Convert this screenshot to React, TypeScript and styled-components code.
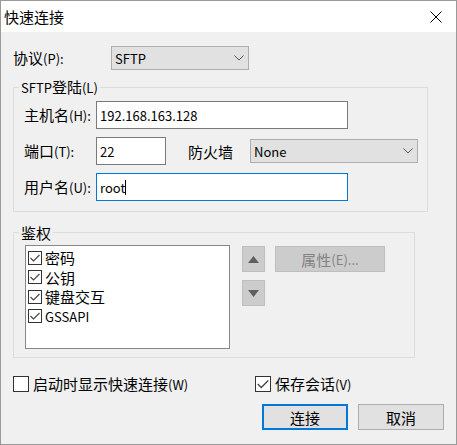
import React from "react";
import styled, { createGlobalStyle } from "styled-components";

const FONT = `"Noto Sans CJK SC", "Microsoft YaHei", sans-serif`;

const GlobalStyle = createGlobalStyle`
  html, body { margin: 0; padding: 0; background: #f0f0f0; }
  body { font-family: ${FONT}; font-size: 15px; line-height: 17px; color: #000; }
  * { box-sizing: border-box; }
`;

const LatinRun = styled.span`
  font-size: 13px;
`;

const T: React.FC<{ children: string }> = ({ children }) => {
  const parts = children.split(/([\u0000-\u024f]+)/).filter((s) => s.length > 0);
  return (
    <>
      {parts.map((p, i) =>
        /^[\u0000-\u024f]+$/.test(p) ? <LatinRun key={i}>{p}</LatinRun> : <React.Fragment key={i}>{p}</React.Fragment>
      )}
    </>
  );
};

const Window = styled.div`
  width: 457px;
  height: 445px;
  border: 1px solid #9a9a9a;
  background: #f0f0f0;
  display: flex;
  flex-direction: column;
  overflow: hidden;
`;

const TitleBar = styled.div`
  height: 31px;
  flex: none;
  background: #ffffff;
  display: flex;
  align-items: center;
  justify-content: space-between;
  padding: 0 14px 0 3px;
`;

const Title = styled.span`
  font-size: 15px;
  line-height: 17px;
`;

const Client = styled.div`
  display: flex;
  flex-direction: column;
  padding: 14px 12px 0 12px;
`;

const Row = styled.div<{ $h?: number }>`
  display: flex;
  align-items: center;
  height: ${(p) => p.$h ?? 28}px;
`;

const Label = styled.span<{ $w: number }>`
  width: ${(p) => p.$w}px;
  flex: none;
  white-space: nowrap;
`;

const Select = styled.div<{ $w: number }>`
  width: ${(p) => p.$w}px;
  height: 24px;
  flex: none;
  border: 1px solid #adadad;
  background: #e1e1e1;
  display: flex;
  align-items: center;
  justify-content: space-between;
  padding: 0 4px 0 3px;
`;

const TextBox = styled.div<{ $w: number; $focused?: boolean }>`
  width: ${(p) => p.$w}px;
  height: 28px;
  flex: none;
  border: 1px solid ${(p) => (p.$focused ? "#0078d7" : "#7a7a7a")};
  background: #ffffff;
  display: flex;
  align-items: center;
  padding: 0 3px;
  white-space: nowrap;
`;

const Caret = styled.span`
  display: inline-block;
  width: 1px;
  height: 15px;
  background: #000;
`;

const Group = styled.fieldset<{ $w: number; $mt: number }>`
  margin: ${(p) => p.$mt}px 0 0 0;
  padding: 0;
  width: ${(p) => p.$w}px;
  min-width: 0;
  border: 1px solid #dcdcdc;
`;

const Legend = styled.legend`
  margin-left: 5px;
  padding: 0 2px;
  line-height: 17px;
  font-size: 15px;
`;

const LoginBody = styled.div`
  display: flex;
  flex-direction: column;
  gap: 8px;
  padding: 5px 0 10px 10px;
`;

const Spacer = styled.span<{ $w: number }>`
  width: ${(p) => p.$w}px;
  flex: none;
`;

const AuthBody = styled.div`
  display: flex;
  align-items: flex-start;
  padding: 4px 0 8px 11px;
`;

const ListBox = styled.div`
  width: 205px;
  height: 104px;
  flex: none;
  border: 1px solid #828790;
  background: #ffffff;
  padding: 2px 0 0 2px;
  display: flex;
  flex-direction: column;
`;

const ListItem = styled.div`
  height: 19.5px;
  display: flex;
  align-items: center;
  gap: 3px;
  white-space: nowrap;
`;

const Box = styled.span<{ $size: number }>`
  width: ${(p) => p.$size}px;
  height: ${(p) => p.$size}px;
  flex: none;
  border: 1px solid #333333;
  background: #ffffff;
  display: inline-flex;
  align-items: center;
  justify-content: center;
`;

const SideButtons = styled.div`
  display: grid;
  grid-template-columns: 23px 110px;
  column-gap: 10px;
  row-gap: 8px;
  margin-left: 12px;
  margin-top: 1px;
`;

const FlatButton = styled.div<{ $w: number }>`
  width: ${(p) => p.$w}px;
  height: 26px;
  border: 1px solid #bfbfbf;
  background: #cccccc;
  color: #838383;
  display: flex;
  align-items: center;
  justify-content: center;
  white-space: nowrap;
`;

const OptionsRow = styled.div`
  display: grid;
  grid-template-columns: 242px auto;
  height: 16px;
  margin-top: 17px;
`;

const Option = styled.label`
  display: flex;
  align-items: center;
  gap: 4px;
  white-space: nowrap;
`;

const ButtonRow = styled.div`
  display: flex;
  justify-content: flex-end;
  gap: 10px;
  margin-top: 13px;
`;

const PushButton = styled.div<{ $default?: boolean }>`
  width: 86px;
  height: 26px;
  border: ${(p) => (p.$default ? "2px solid #0078d7" : "1px solid #adadad")};
  background: #e1e1e1;
  display: flex;
  align-items: center;
  justify-content: center;
`;

const Chevron = () => (
  <svg width="10" height="6" viewBox="0 0 10 6">
    <polyline points="0.5,0.5 5,5 9.5,0.5" fill="none" stroke="#555" strokeWidth="1" />
  </svg>
);

const CloseIcon = () => (
  <svg width="12" height="12" viewBox="0 0 12 12">
    <path d="M0.5 0.5 L11.5 11.5 M11.5 0.5 L0.5 11.5" stroke="#000" strokeWidth="1" />
  </svg>
);

const Check: React.FC<{ size: number; checked: boolean }> = ({ size, checked }) => (
  <Box $size={size}>
    {checked && (
      <svg width={size - 2} height={size - 2} viewBox="0 0 12 12">
        <polyline points="1.5,6 4.5,9 10.5,3" fill="none" stroke="#444" strokeWidth="1.1" />
      </svg>
    )}
  </Box>
);

const Arrow: React.FC<{ up: boolean }> = ({ up }) => (
  <svg width="11" height="7" viewBox="0 0 11 7">
    <polygon points={up ? "5.5,0 11,7 0,7" : "0,0 11,0 5.5,7"} fill="#5f5f5f" />
  </svg>
);

const authItems = ["密码", "公钥", "键盘交互", "GSSAPI"];

export default function App() {
  return (
    <>
      <GlobalStyle />
      <Window>
        <TitleBar>
          <Title>快速连接</Title>
          <CloseIcon />
        </TitleBar>
        <Client>
          <Row $h={24}>
            <Label $w={98}>
              <T>协议(P):</T>
            </Label>
            <Select $w={138}>
              <span>
                <T>SFTP</T>
              </span>
              <Chevron />
            </Select>
          </Row>

          <Group $w={415} $mt={8}>
            <Legend>
              <T>SFTP登陆(L)</T>
            </Legend>
            <LoginBody>
              <Row>
                <Label $w={72}>
                  <T>主机名(H):</T>
                </Label>
                <TextBox $w={252}>
                  <T>192.168.163.128</T>
                </TextBox>
              </Row>
              <Row>
                <Label $w={72}>
                  <T>端口(T):</T>
                </Label>
                <TextBox $w={70}>
                  <T>22</T>
                </TextBox>
                <Spacer $w={22} />
                <Label $w={62}>防火墙</Label>
                <Select $w={168}>
                  <span>
                    <T>None</T>
                  </span>
                  <Chevron />
                </Select>
              </Row>
              <Row>
                <Label $w={72}>
                  <T>用户名(U):</T>
                </Label>
                <TextBox $w={252} $focused>
                  <T>root</T>
                  <Caret />
                </TextBox>
              </Row>
            </LoginBody>
          </Group>

          <Group $w={402} $mt={12}>
            <Legend>鉴权</Legend>
            <AuthBody>
              <ListBox>
                {authItems.map((item) => (
                  <ListItem key={item}>
                    <Check size={14} checked />
                    <span>
                      <T>{item}</T>
                    </span>
                  </ListItem>
                ))}
              </ListBox>
              <SideButtons>
                <FlatButton $w={23}>
                  <Arrow up />
                </FlatButton>
                <FlatButton $w={110}>
                  <T>属性(E)...</T>
                </FlatButton>
                <FlatButton $w={23}>
                  <Arrow up={false} />
                </FlatButton>
              </SideButtons>
            </AuthBody>
          </Group>

          <OptionsRow>
            <Option>
              <Check size={16} checked={false} />
              <span>
                <T>启动时显示快速连接(W)</T>
              </span>
            </Option>
            <Option>
              <Check size={16} checked />
              <span>
                <T>保存会话(V)</T>
              </span>
            </Option>
          </OptionsRow>

          <ButtonRow>
            <PushButton $default>连接</PushButton>
            <PushButton>取消</PushButton>
          </ButtonRow>
        </Client>
      </Window>
    </>
  );
}
